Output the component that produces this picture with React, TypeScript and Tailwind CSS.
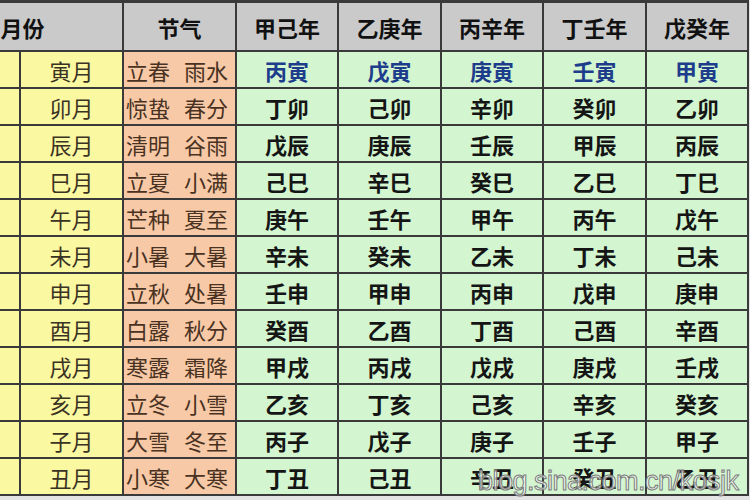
import React from 'react';

const months = ['寅月', '卯月', '辰月', '巳月', '午月', '未月', '申月', '酉月', '戌月', '亥月', '子月', '丑月'];
const terms = [
  ['立春', '雨水'], ['惊蛰', '春分'], ['清明', '谷雨'], ['立夏', '小满'],
  ['芒种', '夏至'], ['小暑', '大暑'], ['立秋', '处暑'], ['白露', '秋分'],
  ['寒露', '霜降'], ['立冬', '小雪'], ['大雪', '冬至'], ['小寒', '大寒'],
];
const years = ['甲己年', '乙庚年', '丙辛年', '丁壬年', '戊癸年'];
const pillars = [
  ['丙寅', '丁卯', '戊辰', '己巳', '庚午', '辛未', '壬申', '癸酉', '甲戌', '乙亥', '丙子', '丁丑'],
  ['戊寅', '己卯', '庚辰', '辛巳', '壬午', '癸未', '甲申', '乙酉', '丙戌', '丁亥', '戊子', '己丑'],
  ['庚寅', '辛卯', '壬辰', '癸巳', '甲午', '乙未', '丙申', '丁酉', '戊戌', '己亥', '庚子', '辛丑'],
  ['壬寅', '癸卯', '甲辰', '乙巳', '丙午', '丁未', '戊申', '己酉', '庚戌', '辛亥', '壬子', '癸丑'],
  ['甲寅', '乙卯', '丙辰', '丁巳', '戊午', '己未', '庚申', '辛酉', '壬戌', '癸亥', '甲子', '乙丑'],
];

const font = "font-['Noto_Sans_CJK_SC','Noto_Sans',sans-serif]";

export default function App() {
  return (
    <div className={`relative w-[750px] h-[500px] overflow-hidden bg-[#e4e4e4] ${font}`}>
      <div className="ml-[-77px] w-fit bg-[#3a3a3a] pt-[3px] pb-[2px] pr-[2px]">
        <div className="grid grid-cols-[96px_101px_111px_100px_101px_100px_101px_100px] grid-rows-[47px_repeat(12,35px)] gap-[2px] text-[22px] leading-none">
          {/* header */}
          <div className="col-span-2 bg-[#cacaca] flex items-center justify-center font-bold text-[#111]">月份</div>
          <div className="bg-[#cacaca] flex items-center justify-center font-bold text-[#111]">节气</div>
          {years.map((y) => (
            <div key={y} className="bg-[#cacaca] flex items-center justify-center font-bold text-[#111]">{y}</div>
          ))}

          {/* body */}
          {months.map((m, r) => (
            <React.Fragment key={m}>
              <div className="bg-[#fbf8a2]" />
              <div className="bg-[#fbf8a2] flex items-center justify-center text-[#3a3222]">{m}</div>
              <div className="bg-[#f7c9a6] flex items-center gap-[14px] pl-[2px] text-[#4a3222]">
                <span>{terms[r][0]}</span>
                <span>{terms[r][1]}</span>
              </div>
              {pillars.map((col, c) => (
                <div
                  key={c}
                  className={`bg-[#d3f5d0] flex items-center justify-center font-semibold ${r === 0 ? 'text-[#1d3d8c]' : 'text-[#151515]'}`}
                >
                  {col[r]}
                </div>
              ))}
            </React.Fragment>
          ))}
        </div>
      </div>

      {/* watermark */}
      <div className="absolute left-[478px] top-[468px] text-[27px] leading-none font-['Liberation_Sans',sans-serif] text-white/70 [-webkit-text-stroke:1px_#7a7a7a] tracking-[-0.5px] whitespace-nowrap">
        blog.sina.com.cn/kosjk
      </div>
    </div>
  );
}
